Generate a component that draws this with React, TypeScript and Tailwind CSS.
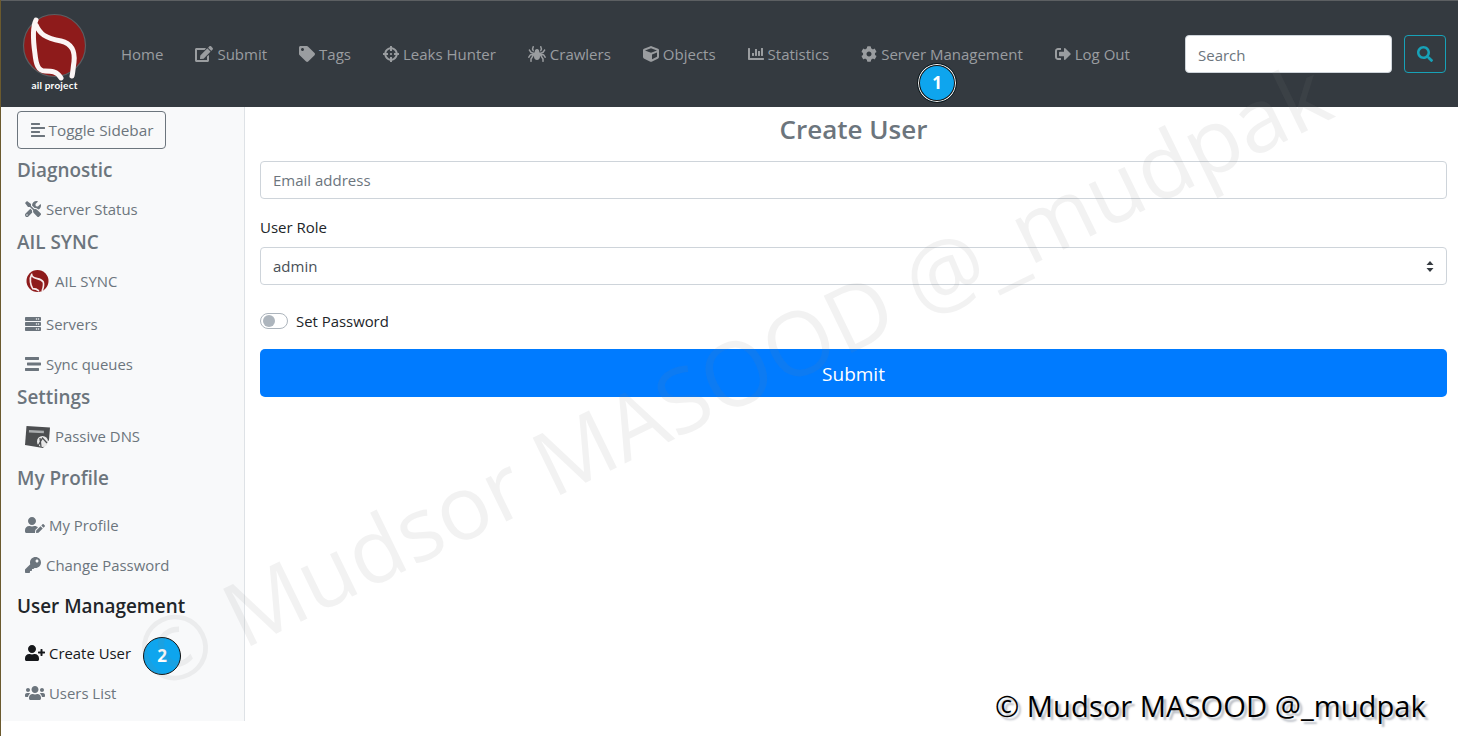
import React from "react";
import { FaEdit, FaTag, FaCrosshairs, FaSpider, FaCube, FaChartBar, FaCog, FaSignOutAlt, FaSearch, FaAlignLeft, FaTools, FaServer, FaStream, FaUserEdit, FaKey, FaUserPlus, FaUsers } from "react-icons/fa";

const Logo = () => (
  <svg width="64" height="64" viewBox="0 0 64 64" className="overflow-visible">
    <circle cx="31.5" cy="31.5" r="31" fill="#8e1b1b" stroke="#5a5f63" strokeWidth="1.2" />
    <path d="M13 6 C 9 14 10 26 12 40 C 13 50 15 57 22 57 C 28 57 34 57 38 64 M13 11 C 17 20 22 24 38 27 C 50 30 52 38 51 48 C 50 54 50 58 49 62" fill="none" stroke="#fbf5f5" strokeWidth="5" strokeLinecap="round" />
  </svg>
);

const SmallLogo = () => (
  <svg width="23" height="24" viewBox="0 0 24 24">
    <circle cx="12" cy="12" r="11.5" fill="#8e1b1b" />
    <path d="M6 5 C 3 10 5 17 7 20 C 9 20 11 20 13 22 M6 6 C 8 11 15 8 18 13 C 19 16 18 19 17 22" fill="none" stroke="#f6eaea" strokeWidth="1.7" strokeLinecap="round" />
  </svg>
);

const DnsIcon = () => (
  <svg width="25" height="23" viewBox="0 0 25 23">
    <path d="M1.5 1 L25 2.5 L24 15 L18 23 L0 20 Z" fill="#4c4e50" />
    <rect x="4" y="5" width="15" height="2.5" fill="#a9acae" transform="rotate(3 4 5)" />
    <circle cx="17.5" cy="16.5" r="5.5" fill="#e8e8e8" />
    <path d="M13 21 L17.5 13 L22 18 M16 22 L15 13" stroke="#4c4e50" strokeWidth="1.3" fill="none" />
  </svg>
);

const nav = [
  { label: "Home" },
  { label: "Submit", icon: <FaEdit size={18} /> },
  { label: "Tags", icon: <FaTag size={16} /> },
  { label: "Leaks Hunter", icon: <FaCrosshairs size={16} /> },
  { label: "Crawlers", icon: <FaSpider size={18} /> },
  { label: "Objects", icon: <FaCube size={16} /> },
  { label: "Statistics", icon: <FaChartBar size={16} /> },
  { label: "Server Management", icon: <FaCog size={16} /> },
  { label: "Log Out", icon: <FaSignOutAlt size={16} /> },
];

const Heading = ({ children, className }: { children: React.ReactNode; className: string }) => (
  <h5 className={`h-6 text-[18.9px] leading-6 font-semibold pl-[17px] ${className}`}>{children}</h5>
);

const Item = ({ icon, children, className }: { icon: React.ReactNode; children: React.ReactNode; className: string }) => (
  <div className={`flex items-center pl-[25px] text-[14.9px] ${className}`}>
    {icon}
    <span>{children}</span>
  </div>
);

const Badge = ({ n, className }: { n: number; className: string }) => (
  <div className={`absolute rounded-full bg-[#0ea5ee] border border-[#111] flex items-center justify-center text-white font-bold text-[17px] ${className}`}>
    {n}
  </div>
);

export default function App() {
  return (
    <div className="relative w-[1458px] h-[736px] overflow-hidden bg-white text-[#212529] font-['Open_Sans','Noto_Sans',sans-serif] text-[15px]">
      <header className="h-[107px] bg-[#343a40] border-t border-t-[#5c5f62] flex items-center pl-[23px] pr-3">
        <div className="flex flex-col items-center w-[63px] mr-[35px] -mt-[3px]">
          <Logo />
          <span className="text-white text-[10px] leading-[12px] font-bold font-['Lato',sans-serif] tracking-[0.2px] mt-[1px]">ail project</span>
        </div>
        <nav className="flex items-center gap-[32px] text-[15px] text-[#9a9da0] w-[1064px]">
          {nav.map((n) => (
            <a key={n.label} className="flex items-center gap-[4px] whitespace-nowrap">
              {n.icon}
              <span>{n.label}</span>
            </a>
          ))}
        </nav>
        <input placeholder="Search" className="w-[207px] h-[38px] bg-white rounded-[4px] border border-[#ced4da] px-3 pt-[1px] text-[15px] placeholder:text-[#6c757d]" />
        <button className="ml-3 w-[42px] h-[38px] rounded-[4px] border border-[#17a2b8] flex items-center justify-center text-[#17a2b8]">
          <FaSearch size={16} />
        </button>
      </header>

      <div className="flex">
        <aside className="w-[245px] h-[614px] bg-[#f8f9fa] border-r border-r-[#dee2e6] text-[#6c757d]">
          <button className="ml-[17px] mt-[4px] w-[149px] h-[38px] flex items-center justify-center gap-[3px] border border-[#6c757d] rounded-[4px] text-[15.3px]">
            <FaAlignLeft size={16} />
            Toggle Sidebar
          </button>
          <Heading className="mt-[9px]">Diagnostic</Heading>
          <Item className="h-10 mt-[7px] gap-[5px]" icon={<FaTools size={16} />}>Server Status</Item>
          <Heading className="mt-[1px]">AIL SYNC</Heading>
          <Item className="h-[46px] mt-[4px] gap-[6px] pl-[26px]" icon={<SmallLogo />}>AIL SYNC</Item>
          <Item className="h-10 gap-[5px]" icon={<FaServer size={16} />}>Servers</Item>
          <Item className="h-10 gap-[5px]" icon={<FaStream size={16} />}>Sync queues</Item>
          <Heading className="mt-[1px]">Settings</Heading>
          <Item className="h-[46px] mt-[4px] gap-[5px]" icon={<DnsIcon />}>Passive DNS</Item>
          <Heading className="mt-[7px]">My Profile</Heading>
          <Item className="h-10 mt-[15px] gap-[4px]" icon={<FaUserEdit size={20} />}>My Profile</Item>
          <Item className="h-10 gap-[5px]" icon={<FaKey size={16} />}>Change Password</Item>
          <Heading className="mt-[9px] text-[#212529]">User Management</Heading>
          <Item className="h-10 mt-[15px] gap-[4px] text-[#16181b]" icon={<FaUserPlus size={20} />}>Create User</Item>
          <Item className="h-10 gap-[4px]" icon={<FaUsers size={20} />}>Users List</Item>
        </aside>

        <main className="flex-1 pl-[15px] pr-[11px]">
          <h3 className="text-center text-[#6c757d] text-[26px] leading-[34px] font-semibold mt-[5px]">Create User</h3>
          <input placeholder="Email address" className="mt-[15px] block w-full h-[38px] rounded-[4px] border border-[#ced4da] px-3 text-[15px] placeholder:text-[#6c757d]" />
          <label className="block mt-[16px] leading-[24px] text-[15px]">User Role</label>
          <div className="mt-[8px] h-[38px] rounded-[4px] border border-[#ced4da] flex items-center justify-between px-3 text-[15px] text-[#495057]">
            <span>admin</span>
            <svg width="8" height="13" viewBox="0 0 8 13"><path d="M4 1 L7.5 5 H0.5 Z M4 12 L0.5 8 H7.5 Z" fill="#343a40" /></svg>
          </div>
          <div className="mt-[28px] flex items-center gap-[8px] h-[16px] text-[14.9px]">
            <span className="w-[28px] h-[16px] rounded-full border border-[#adb5bd] bg-white flex items-center pl-[2px]">
              <span className="w-[12px] h-[12px] rounded-full bg-[#adb5bd]" />
            </span>
            Set Password
          </div>
          <button className="mt-[20px] block w-full h-[48px] pt-[2px] rounded-[5px] bg-[#007bff] text-white text-[19px]">Submit</button>
        </main>
      </div>

      <Badge n={1} className="left-[917px] top-[63px] w-[40px] h-[40px] shadow-[inset_0_0_0_1px_#fff,inset_0_0_0_2px_#111]" />
      <Badge n={2} className="left-[143px] top-[637px] w-[38px] h-[38px]" />

      <div className="absolute left-[78px] top-[345px] w-[1240px] text-center -rotate-[26deg] text-[89px] leading-none text-[#7f7f7f]/10 whitespace-nowrap pointer-events-none">
        © Mudsor MASOOD @_mudpak
      </div>

      <div className="absolute left-[995px] top-[686px] text-[29.2px] leading-[40px] text-black whitespace-nowrap [text-shadow:3px_3px_2px_#b8bcc4]">
        © Mudsor MASOOD @_mudpak
      </div>

      <div className="absolute left-0 top-0 w-px h-full bg-[#6b5a2e]" />
    </div>
  );
}
